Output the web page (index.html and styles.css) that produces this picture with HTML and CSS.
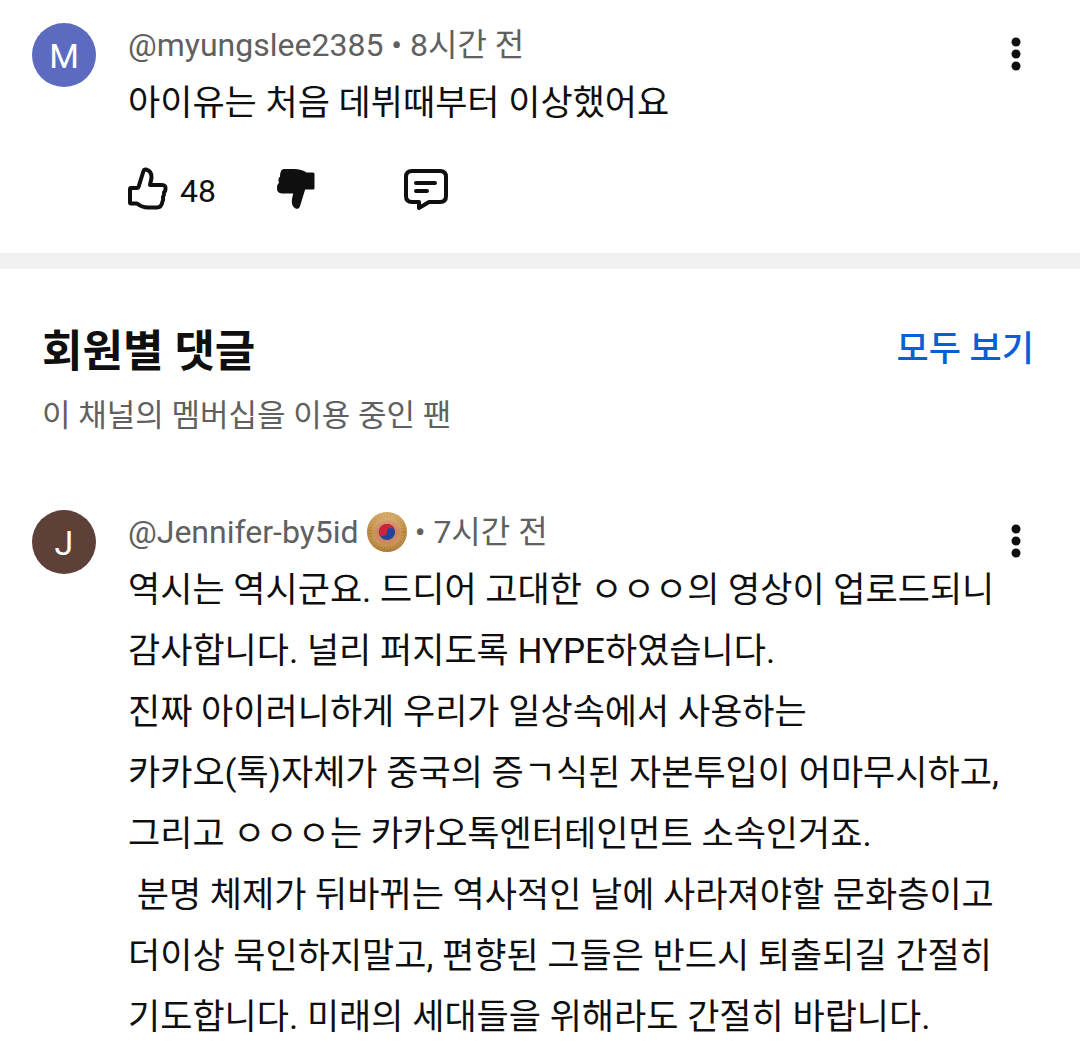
FILE: index.html
```html
<!DOCTYPE html>
<html lang="ko">
  <head>
    <meta charset="utf-8">
    <meta name="viewport" content="width=device-width, initial-scale=1">
    <title>댓글</title>
    <link rel="stylesheet" href="styles.css">
  </head>

  <body>
    <article class="comment">
      <div class="avatar avatar-blue">M</div>
      <div class="content">
        <div class="meta">@myungslee2385 • 8시간 전</div>
        <p class="text">아이유는 처음 데뷔때부터 이상했어요</p>
        <div class="actions">
          <button type="button" class="action like" aria-label="좋아요 48개">
            <svg width="40" height="44" viewBox="0 0 40 44" fill="none" stroke="#0f0f0f" stroke-width="4" stroke-linejoin="round">
              <path d="M2 22Q2 21 3 21H9Q10 21 10.500 20L15.500 4Q16 2 18 2.500Q24 4 23.500 11L22 18H34Q38 18 37.500 22Q37.500 24 36 25.500Q36.500 28 35 30Q35.500 33 34.500 34.500Q33.500 40.500 29 40.500H20Q14 40.500 9 36.500H3Q2 36.500 2 35.500Z"/>
            </svg>
            <span>48</span>
          </button>
          <button type="button" class="action dislike" aria-label="싫어요">
            <svg width="40" height="44" viewBox="0 0 40 44" fill="#0f0f0f" stroke="#0f0f0f" stroke-width="3" stroke-linejoin="round">
              <path d="M8 3.500H18Q25 3.500 30 7H37V21H28L22.500 39Q21.500 41 20 40Q16.500 38 17.500 32L19 25H6Q2 25 2.500 20.500Q2.500 18 4.500 16Q3 12 5.500 10Q5.500 3.500 8 3.500Z"/>
            </svg>
          </button>
          <button type="button" class="action" aria-label="답글">
            <svg width="44" height="44" viewBox="0 0 44 44" fill="none" stroke="#0f0f0f" stroke-width="4" stroke-linejoin="round" stroke-linecap="round">
              <path d="M8 4H36Q42 4 42 10V29Q42 35 36 35H25L15 41V35H8Q2 35 2 29V10Q2 4 8 4Z"/>
              <path d="M12 16H31M12 24H23"/>
            </svg>
          </button>
        </div>
      </div>
      <button type="button" class="menu" aria-label="작업 메뉴">
        <svg width="10" height="34" viewBox="0 0 10 34" fill="#0f0f0f">
          <circle cx="5" cy="5" r="4.500"/>
          <circle cx="5" cy="17" r="4.500"/>
          <circle cx="5" cy="29" r="4.500"/>
        </svg>
      </button>
    </article>

    <section class="members">
      <header class="members-header">
        <div>
          <h2>회원별 댓글</h2>
          <p class="subtitle">이 채널의 멤버십을 이용 중인 팬</p>
        </div>
        <a class="see-all" href="#">모두 보기</a>
      </header>

      <article class="comment">
        <div class="avatar avatar-brown">J</div>
        <div class="content">
          <div class="meta">
            <span>@Jennifer-by5id</span>
            <svg width="40" height="40" viewBox="0 0 40 40">
              <defs>
                <radialGradient id="gold">
                  <stop offset="0" stop-color="#c0705a"/>
                  <stop offset="0.6" stop-color="#cd8a60"/>
                  <stop offset="0.72" stop-color="#c89a52"/>
                  <stop offset="1" stop-color="#b5803a"/>
                </radialGradient>
                <linearGradient id="shine" x1="0" y1="0" x2="0" y2="1">
                  <stop offset="0" stop-color="#f3d59a" stop-opacity="0.5"/>
                  <stop offset="0.5" stop-color="#f3d59a" stop-opacity="0"/>
                  <stop offset="1" stop-color="#9a6426" stop-opacity="0.3"/>
                </linearGradient>
              </defs>
              <circle cx="20" cy="20" r="20" fill="url(#gold)"/>
              <circle cx="20" cy="20" r="16" fill="none" stroke="#94651f" stroke-width="4" stroke-dasharray="1 2" opacity="0.4"/>
              <circle cx="20" cy="20" r="20" fill="url(#shine)"/>
              <circle cx="20" cy="20" r="8" fill="#1d459c"/>
              <path d="M12 20A8 8 0 0 1 28 20A4 4 0 0 0 20 20A4 4 0 0 1 12 20Z" fill="#cf2338"/>
            </svg>
            <span>• 7시간 전</span>
          </div>
          <p class="text">역시는 역시군요. 드디어 고대한 ㅇㅇㅇ의 영상이 업로드되니 감사합니다. 널리 퍼지도록 HYPE하였습니다.
진짜 아이러니하게 우리가 일상속에서 사용하는
카카오(톡)자체가 중국의 증ㄱ식된 자본투입이 어마무시하고, 그리고 ㅇㅇㅇ는 카카오톡엔터테인먼트 소속인거죠.
 분명 체제가 뒤바뀌는 역사적인 날에 사라져야할 문화층이고 더이상 묵인하지말고, 편향된 그들은 반드시 퇴출되길 간절히 기도합니다. 미래의 세대들을 위해라도 간절히 바랍니다.</p>
        </div>
        <button type="button" class="menu" aria-label="작업 메뉴">
          <svg width="10" height="34" viewBox="0 0 10 34" fill="#0f0f0f">
            <circle cx="5" cy="5" r="4.500"/>
            <circle cx="5" cy="17" r="4.500"/>
            <circle cx="5" cy="29" r="4.500"/>
          </svg>
        </button>
      </article>
    </section>
  </body>
</html>
```

FILE: styles.css
```css
body {
  margin: 0;
  background-color: #fff;
  color: #0f0f0f;
  font-family: Roboto, "Noto Sans CJK KR", sans-serif;
}
h2, p {
  margin: 0;
}
button {
  padding: 0;
  border: 0;
  background: none;
  color: inherit;
  font: inherit;
  cursor: pointer;
}
svg {
  display: block;
}
.comment {
  display: flex;
  align-items: flex-start;
  padding: 23px 48px 0 32px;
}
.avatar {
  flex: none;
  width: 64px;
  height: 64px;
  margin-right: 32px;
  border-radius: 50%;
  color: #fff;
  font-size: 34px;
  line-height: 66px;
  text-align: center;
}
.avatar-blue {
  background-color: #5c6bc0;
}
.avatar-brown {
  background-color: #5d4037;
}
.content {
  flex: 1;
  min-width: 0;
}
.meta {
  display: flex;
  align-items: center;
  gap: 8px;
  height: 44px;
  margin-bottom: 6px;
  color: #606060;
  font-size: 32px;
  line-height: 44px;
}
.text {
  font-size: 35px;
  line-height: 61px;
  white-space: pre-wrap;
  word-break: keep-all;
}
.actions {
  display: flex;
  align-items: center;
  padding: 31px 0 40px;
}
.action {
  display: flex;
  align-items: center;
  gap: 12px;
  height: 48px;
  font-size: 32px;
  line-height: 44px;
}
.action span {
  padding-top: 4px;
}
.like {
  margin-right: 60px;
}
.dislike {
  margin-right: 88px;
}
.menu {
  display: flex;
  flex: none;
  justify-content: center;
  width: 32px;
  padding-top: 14px;
}
.members {
  border-top: 16px solid #f1f1f1;
}
.members-header {
  display: flex;
  justify-content: space-between;
  padding: 53px 46px 41px 42px;
}
h2 {
  font-size: 44px;
  line-height: 60px;
}
.subtitle {
  margin-top: 4px;
  color: #606060;
  font-size: 31px;
  line-height: 60px;
}
.see-all {
  color: #065fd4;
  font-size: 35px;
  font-weight: 500;
  line-height: 56px;
  text-decoration: none;
}
```
